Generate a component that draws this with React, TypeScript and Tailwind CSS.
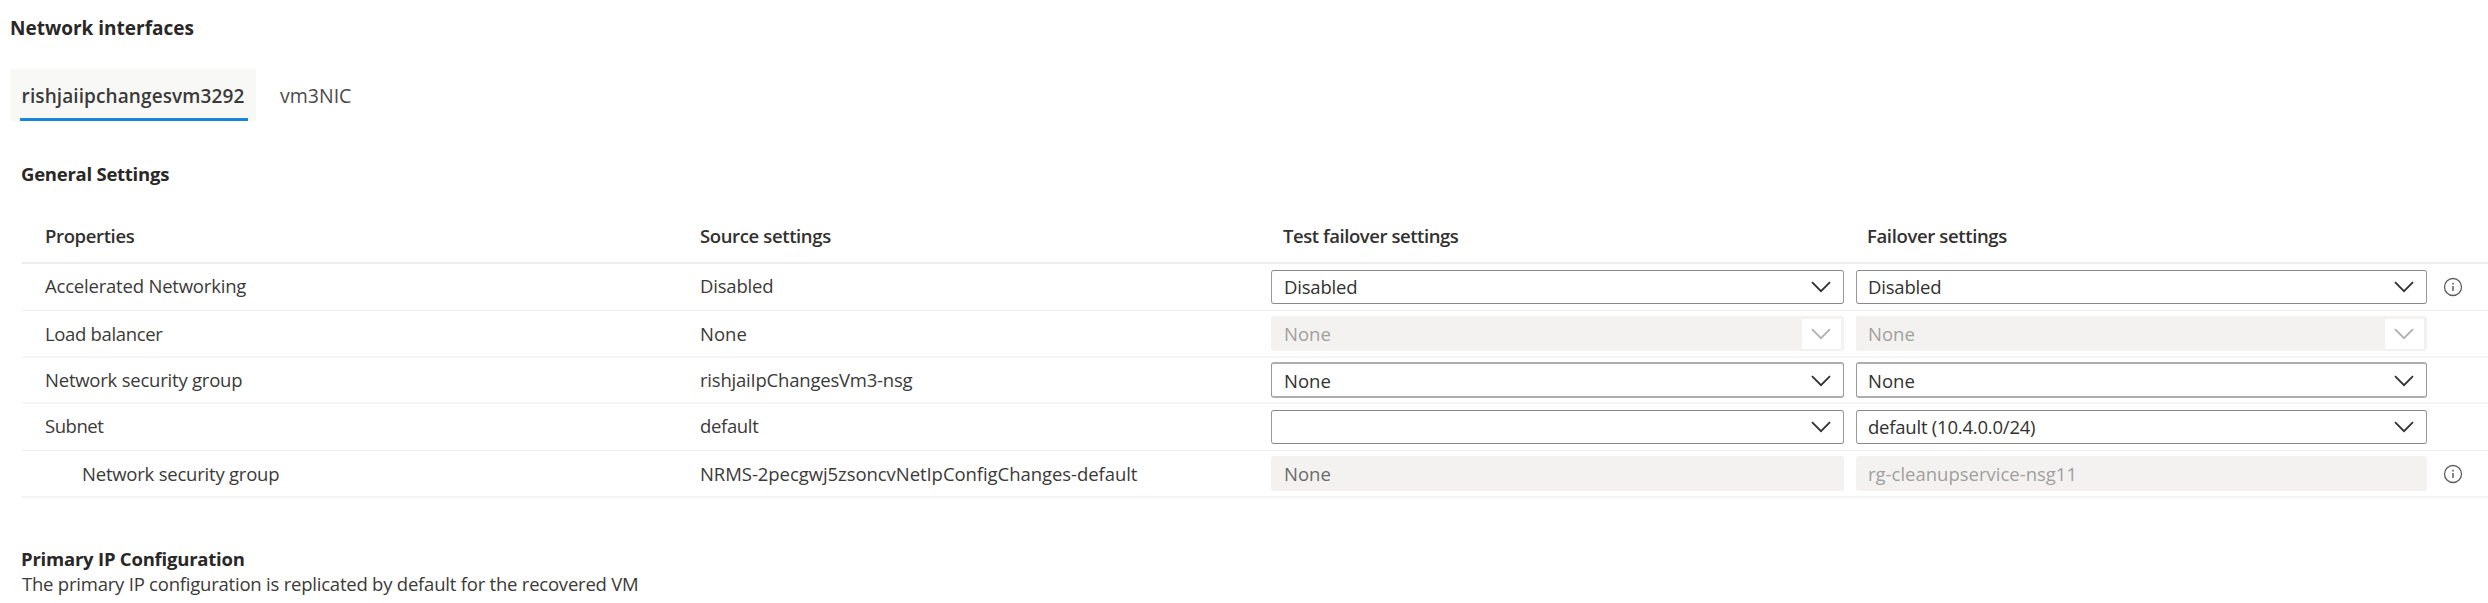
import type { ReactNode } from "react";

type Field = { text: string; tracking: string; kind: "select" | "disabledSelect" | "readonly"; tone: string };
type Row = {
  label: ReactNode;
  source: ReactNode;
  test: Field;
  failover: Field;
  info?: boolean;
  row: string;
  text: string;
  box: string;
};

const dark = "text-[#323130]";
const muted = "text-[#a19f9d]";

const rows: Row[] = [
  {
    label: <span className="tracking-[-0.2px]">Accelerated Networking</span>,
    source: <span className="tracking-[-0.19px]">Disabled</span>,
    test: { text: "Disabled", tracking: "tracking-[-0.19px]", kind: "select", tone: dark },
    failover: { text: "Disabled", tracking: "tracking-[-0.19px]", kind: "select", tone: dark },
    info: true,
    row: "h-[47px] border-b border-[#efefef]",
    text: "pb-[2px]",
    box: "h-[34px] border-y border-y-[#8a8886]",
  },
  {
    label: <span className="tracking-[-0.34px]">Load balancer</span>,
    source: <span>None</span>,
    test: { text: "None", tracking: "tracking-normal", kind: "disabledSelect", tone: muted },
    failover: { text: "None", tracking: "tracking-normal", kind: "disabledSelect", tone: muted },
    row: "h-[47px] border-b-2 border-[#f6f6f6]",
    text: "",
    box: "h-[35px]",
  },
  {
    label: <span className="tracking-[-0.22px]">Network security group</span>,
    source: <span className="tracking-[-0.21px]">rishjaiIpChangesVm3-nsg</span>,
    test: { text: "None", tracking: "tracking-normal", kind: "select", tone: dark },
    failover: { text: "None", tracking: "tracking-normal", kind: "select", tone: dark },
    row: "h-[46px] border-b-2 border-[#f6f6f6]",
    text: "",
    box: "h-[36px] border-y-2 border-y-[#b0afae] pt-px",
  },
  {
    label: <span className="tracking-[-0.45px]">Subnet</span>,
    source: <span className="tracking-[-0.35px]">default</span>,
    test: { text: "", tracking: "tracking-normal", kind: "select", tone: dark },
    failover: { text: "default (10.4.0.0/24)", tracking: "tracking-[-0.22px]", kind: "select", tone: dark },
    row: "h-[47px] border-b border-[#efefef]",
    text: "pb-[2px]",
    box: "h-[34px] border-y border-y-[#8a8886]",
  },
  {
    label: <span className="ml-[37px] tracking-[-0.22px]">Network security group</span>,
    source: <span className="tracking-[-0.06px]">NRMS-2pecgwj5zsoncvNetIpConfigChanges-default</span>,
    test: { text: "None", tracking: "tracking-normal", kind: "readonly", tone: "text-[#6b6967]" },
    failover: { text: "rg-cleanupservice-nsg11", tracking: "tracking-normal", kind: "readonly", tone: muted },
    info: true,
    row: "h-[47px] border-b-2 border-[#f4f4f4]",
    text: "",
    box: "h-[35px]",
  },
];

function Chevron({ className }: { className: string }) {
  return (
    <svg viewBox="0 0 20 12" className={`h-[12px] w-[20px] ${className}`} fill="none" stroke="currentColor" strokeWidth="1.8">
      <path d="M1 1.2l9 9 9-9" />
    </svg>
  );
}

function InfoIcon() {
  return (
    <svg viewBox="0 0 20 20" className="ml-[16px] size-[20px] text-[#605e5c]" fill="none" stroke="currentColor">
      <circle cx="10" cy="10" r="8.5" strokeWidth="1.3" />
      <path d="M10 9v5M10 5.8v1.6" strokeWidth="1.5" />
    </svg>
  );
}

function FieldBox({ field, box, width, pad }: { field: Field; box: string; width: string; pad: string }) {
  const surface =
    field.kind === "select" ? "border-x-[1.5px] border-x-[#9b9998] bg-white" : "border-x border-x-[#f3f2f1] bg-[#f3f2f1]";
  return (
    <div className={`flex items-center justify-between rounded-[3px] ${width} ${box} ${surface} ${pad} ${field.tone}`}>
      <span className={field.tracking}>{field.text}</span>
      {field.kind === "select" && <Chevron className="mr-[12px] text-[#323130]" />}
      {field.kind === "disabledSelect" && (
        <span className="mr-[2px] flex h-[30px] w-[39px] items-center bg-white pl-[9px]">
          <Chevron className="text-[#b3b1af]" />
        </span>
      )}
    </div>
  );
}

export default function App() {
  return (
    <main className="h-[603px] w-[2488px] overflow-hidden bg-white font-['Open_Sans',sans-serif] text-[18.5px] leading-[26px] text-[#3b3a39]">
      <h2 className="pt-[15px] pl-[10px] text-[19px] font-bold text-[#292827]">Network interfaces</h2>

      <nav className="mt-[28px] ml-[10px] flex h-[52px] text-[19px]">
        <div className="flex w-[246px] flex-col items-center justify-between bg-[#f8f8f7] pt-[14px]">
          <span className="font-semibold tracking-[0.1px] text-[#3b3a39]">rishjaiipchangesvm3292</span>
          <span className="mr-[-1px] h-[3px] w-[228px] bg-[#1a86d9]" />
        </div>
        <span className="pt-[14px] pl-[24px] text-[19.5px] text-[#4b4a49]">vm3NIC</span>
      </nav>

      <section className="pl-[22px]">
        <h3 className="mt-[40px] ml-[-1px] font-bold tracking-[-0.25px] text-[#292827]">General Settings</h3>

        <div className="mt-[23px] flex h-[54px] items-center border-b-2 border-[#ededed] pb-px pl-[23px] font-semibold text-[#323130]">
          <span className="w-[655px] tracking-[-0.36px]">Properties</span>
          <span className="w-[583px] tracking-[-0.37px]">Source settings</span>
          <span className="w-[584px] tracking-[-0.44px]">Test failover settings</span>
          <span className="tracking-[-0.36px]">Failover settings</span>
        </div>

        {rows.map((r, i) => (
          <div key={i} className={`flex items-center pl-[23px] ${r.row}`}>
            <div className={`w-[655px] ${r.text}`}>{r.label}</div>
            <div className={`w-[571px] ${r.text}`}>{r.source}</div>
            <FieldBox field={r.test} box={r.box} width="w-[573px]" pad="pl-[12px]" />
            <div className="w-[12px]" />
            <FieldBox field={r.failover} box={r.box} width="w-[571px]" pad="pl-[11px]" />
            {r.info && <InfoIcon />}
          </div>
        ))}

        <h3 className="mt-[48px] ml-[-1px] font-bold tracking-[-0.22px] text-[#292827]">Primary IP Configuration</h3>
        <p className="mt-[-1px] leading-[26px] tracking-[-0.22px]">The primary IP configuration is replicated by default for the recovered VM</p>
      </section>
    </main>
  );
}
